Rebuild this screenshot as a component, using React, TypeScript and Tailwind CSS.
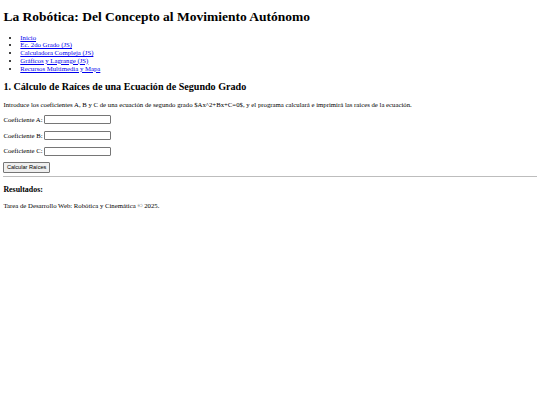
import { useState } from "react";

const serif = "font-['Times_New_Roman','Liberation_Serif',serif]";

const links = [
  "Inicio",
  "Ec. 2do Grado (JS)",
  "Calculadora Compleja (JS)",
  "Gráficos y Lagrange (JS)",
  "Recursos Multimedia y Mapa",
];

function CoefRow({ label }: { label: string }) {
  const [value, setValue] = useState("");
  return (
    <p className="my-[6.75px] flex items-center">
      <label className="mr-[1.7px]">{label}</label>
      <input
        type="text"
        value={value}
        onChange={(e) => setValue(e.target.value)}
        className="w-[66.5px] h-[9px] border border-[#767676] rounded-[1px] bg-white px-[1px] text-[5.6px] outline-none"
      />
    </p>
  );
}

export default function App() {
  return (
    <div className={`${serif} px-[3.4px] pb-[3.4px] pt-[0.1px] text-[6.75px] leading-[1.15] text-black bg-white min-h-[405px]`}>
      {/* Header */}
      <h1 className="text-[13.5px] font-bold mt-[8.9px] mb-[9px] leading-[1.15]">
        La Robótica: Del Concepto al Movimiento Autónomo
      </h1>

      {/* Nav */}
      <ul className="list-disc pl-[16.9px] my-[6.75px]">
        {links.map((l) => (
          <li key={l}>
            <a href="#" className="text-[#0000ee] underline">
              {l}
            </a>
          </li>
        ))}
      </ul>

      {/* Ecuación */}
      <h2 className="text-[10.1px] font-bold my-[8.4px] leading-[1.15]">
        1. Cálculo de Raíces de una Ecuación de Segundo Grado
      </h2>
      <p className="my-[6.75px]">
        Introduce los coeficientes A, B y C de una ecuación de segundo grado $Ax^2+Bx+C=0$, y el programa calculará e
        imprimirá las raíces de la ecuación.
      </p>
      <CoefRow label="Coeficiente A:" />
      <CoefRow label="Coeficiente B:" />
      <CoefRow label="Coeficiente C:" />
      <button className="block font-['Liberation_Sans',Arial,sans-serif] text-[5.6px] leading-[1.2] px-[2.5px] py-[1px] bg-[#efefef] border border-[#767676] rounded-[1px]">
        Calcular Raíces
      </button>
      <hr className="mt-[3.4px] mb-[3.4px] border-t border-[#bdbdbd]" />

      {/* Resultados */}
      <h3 className="text-[7.9px] font-bold my-[7.9px] leading-[1.15]">Resultados:</h3>
      <div />

      <footer>
        <p className="my-[6.75px]">Tarea de Desarrollo Web: Robótica y Cinemática © 2025.</p>
      </footer>
    </div>
  );
}
